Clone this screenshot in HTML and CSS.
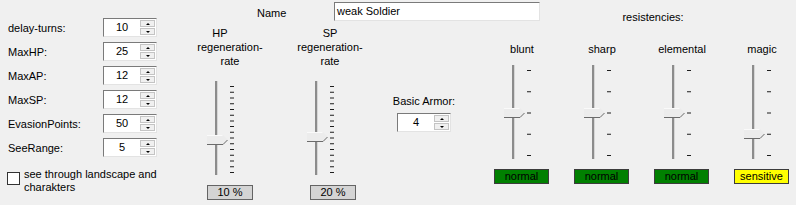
FILE: index.html
```html
<!DOCTYPE html>
<html lang="en">

<head>
    <meta charset="UTF-8">
    <title>Unit editor</title>
    <link rel="stylesheet" href="styles.css">
</head>

<body>
    <!-- shared slider parts -->
    <svg class="defs" width="0" height="0">
        <defs>
            <g id="thumb">
                <polygon points="2,-5 18,-5 23,0 18,5 2,5" fill="#ececec" />
                <polyline points="2,-4.5 17.5,-4.5" stroke="#fafafa" fill="none" />
                <polyline points="2,4.5 18,4.5 22.5,0" stroke="#6b6b6b" fill="none" />
            </g>
            <g id="track">
                <rect x="10" y="1" width="2" height="94" fill="#8c8c8c" />
                <rect x="12" y="1" width="1" height="94" fill="#d6d6d6" />
            </g>
        </defs>
    </svg>

    <div class="form">
        <div class="stats">
            <div class="stat-row">
                <label>delay-turns:</label>
                <div class="spin"><span class="spin-value">10</span><span class="spin-buttons"><i class="up"></i><i class="down"></i></span></div>
            </div>
            <div class="stat-row">
                <label>MaxHP:</label>
                <div class="spin"><span class="spin-value">25</span><span class="spin-buttons"><i class="up"></i><i class="down"></i></span></div>
            </div>
            <div class="stat-row">
                <label>MaxAP:</label>
                <div class="spin"><span class="spin-value">12</span><span class="spin-buttons"><i class="up"></i><i class="down"></i></span></div>
            </div>
            <div class="stat-row">
                <label>MaxSP:</label>
                <div class="spin"><span class="spin-value">12</span><span class="spin-buttons"><i class="up"></i><i class="down"></i></span></div>
            </div>
            <div class="stat-row">
                <label>EvasionPoints:</label>
                <div class="spin"><span class="spin-value">50</span><span class="spin-buttons"><i class="up"></i><i class="down"></i></span></div>
            </div>
            <div class="stat-row">
                <label>SeeRange:</label>
                <div class="spin"><span class="spin-value">5</span><span class="spin-buttons"><i class="up"></i><i class="down"></i></span></div>
            </div>

            <div class="see-through">
                <span class="checkbox"></span>
                <span class="check-text">see through landscape and<br>charakters</span>
            </div>
        </div>

        <div class="main">
            <div class="top-row">
                <span class="name-label">Name</span>
                <div class="name-input">weak Soldier</div>
                <span class="resist-title">resistencies:</span>
            </div>

            <div class="controls">
                <div class="regen">
                    <div class="regen-label"><span class="hp-line">HP</span><br>regeneration-<br>rate</div>
                    <svg class="slider" width="40" height="96" viewBox="0 0 40 96">
                        <use href="#track" />
                        <line x1="27" y1="6" x2="27" y2="93" stroke="#1e1e1e" stroke-width="4" stroke-dasharray="1 4.73" />
                        <use href="#thumb" y="60" />
                    </svg>
                    <div class="percent">10 %</div>
                </div>

                <div class="regen sp">
                    <div class="regen-label">SP<br>regeneration-<br>rate</div>
                    <svg class="slider" width="40" height="96" viewBox="0 0 40 96">
                        <use href="#track" />
                        <line x1="27" y1="6" x2="27" y2="93" stroke="#1e1e1e" stroke-width="4" stroke-dasharray="1 4.73" />
                        <use href="#thumb" y="57" />
                    </svg>
                    <div class="percent">20 %</div>
                </div>

                <div class="armor">
                    <div class="armor-label">Basic Armor:</div>
                    <div class="spin"><span class="spin-value">4</span><span class="spin-buttons"><i class="up"></i><i class="down"></i></span></div>
                </div>

                <div class="resist">
                    <div class="resist-label">blunt</div>
                    <svg class="slider" width="40" height="96" viewBox="0 0 40 96">
                        <use href="#track" />
                        <line x1="27" y1="6" x2="27" y2="92" stroke="#1e1e1e" stroke-width="4" stroke-dasharray="1 20.25" />
                        <use href="#thumb" y="49" />
                    </svg>
                    <div class="status normal">normal</div>
                </div>

                <div class="resist">
                    <div class="resist-label">sharp</div>
                    <svg class="slider" width="40" height="96" viewBox="0 0 40 96">
                        <use href="#track" />
                        <line x1="27" y1="6" x2="27" y2="92" stroke="#1e1e1e" stroke-width="4" stroke-dasharray="1 20.25" />
                        <use href="#thumb" y="49" />
                    </svg>
                    <div class="status normal">normal</div>
                </div>

                <div class="resist">
                    <div class="resist-label">elemental</div>
                    <svg class="slider" width="40" height="96" viewBox="0 0 40 96">
                        <use href="#track" />
                        <line x1="27" y1="6" x2="27" y2="92" stroke="#1e1e1e" stroke-width="4" stroke-dasharray="1 20.25" />
                        <use href="#thumb" y="49" />
                    </svg>
                    <div class="status normal">normal</div>
                </div>

                <div class="resist">
                    <div class="resist-label">magic</div>
                    <svg class="slider" width="40" height="96" viewBox="0 0 40 96">
                        <use href="#track" />
                        <line x1="27" y1="6" x2="27" y2="92" stroke="#1e1e1e" stroke-width="4" stroke-dasharray="1 20.25" />
                        <use href="#thumb" y="70" />
                    </svg>
                    <div class="status sensitive">sensitive</div>
                </div>
            </div>
        </div>
    </div>
</body>

</html>
```

FILE: styles.css
```css
body {
    margin: 0;
    width: 796px;
    height: 205px;
    overflow: hidden;
    background-color: #f0f0f0;
    font-family: "Liberation Sans", Arial, sans-serif;
    font-size: 11px;
    color: #000;
}

.defs {
    position: absolute;
}

.form {
    display: flex;
}

/* left column */
.stats {
    flex: none;
    width: 180px;
    box-sizing: border-box;
    padding: 18px 0 0 8px;
    display: flex;
    flex-direction: column;
    gap: 5px;
}

.stat-row {
    display: flex;
    align-items: center;
    height: 19px;
}

.stat-row label {
    width: 95px;
}

.spin {
    width: 54px;
    height: 19px;
    box-sizing: border-box;
    display: flex;
    background: white;
    border: 1px solid;
    border-color: #7a7a7a #e3e3e3 #e3e3e3 #7a7a7a;
}

.spin-value {
    flex: 1;
    text-align: center;
    line-height: 17px;
}

.spin-buttons {
    width: 16px;
    display: flex;
    flex-direction: column;
    gap: 1px;
    padding: 1px 1px 1px 0;
    box-sizing: border-box;
}

.spin-buttons i {
    flex: 1;
    display: flex;
    align-items: center;
    justify-content: center;
    background: #f0f0f0;
    border: 1px solid #c4c4c4;
}

.spin-buttons i::after {
    content: "";
    border-left: 2px solid transparent;
    border-right: 2px solid transparent;
}

.spin-buttons .up::after {
    border-bottom: 2px solid #000;
}

.spin-buttons .down::after {
    border-top: 2px solid #000;
}

.see-through {
    display: flex;
    align-items: flex-start;
    margin-top: 6px;
    line-height: 13px;
}

.checkbox {
    width: 13px;
    height: 13px;
    box-sizing: border-box;
    margin: 4px 0 0 -1px;
    background: white;
    border: 1px solid #333;
}

.check-text {
    margin-left: 4px;
}

/* right part */
.main {
    flex: none;
    display: flex;
    flex-direction: column;
}

.top-row {
    display: flex;
    align-items: flex-start;
    height: 19px;
    margin-top: 2px;
}

.name-label {
    width: 77px;
    margin: 5px 0 0 77px;
}

.name-input {
    width: 206px;
    height: 19px;
    box-sizing: border-box;
    padding: 0 2px;
    line-height: 17px;
    background: white;
    border: 1px solid;
    border-color: #7a7a7a #e3e3e3 #e3e3e3 #7a7a7a;
}

.resist-title {
    width: 226px;
    margin-top: 9px;
    text-align: center;
}

.controls {
    display: flex;
    margin-top: 5px;
}

.regen {
    flex: none;
    width: 80px;
    margin-left: 10px;
}

.regen.sp {
    margin-left: 20px;
}

.regen-label {
    text-align: center;
    line-height: 14px;
}

.hp-line {
    padding-right: 20px;
}

.regen .slider {
    display: block;
    margin: 12px 0 0 15px;
}

.percent {
    width: 46px;
    height: 15px;
    box-sizing: border-box;
    margin: 9px 0 0 17px;
    background: #d4d4d4;
    border: 1px solid #646464;
    text-align: center;
    line-height: 13px;
}

.sp .percent {
    margin-left: 20px;
}

.armor {
    flex: none;
    width: 68px;
    margin-left: 20px;
    padding-top: 68px;
    display: flex;
    flex-direction: column;
    align-items: center;
}

.armor-label {
    line-height: 14px;
    margin-bottom: 5px;
}

.resist {
    flex: none;
    width: 80px;
}

.armor + .resist {
    margin-left: 24px;
}

.resist-label {
    padding-top: 16px;
    text-align: center;
    line-height: 14px;
}

.resist .slider {
    display: block;
    margin: 8px 0 0 20px;
}

.status {
    width: 55px;
    height: 15px;
    box-sizing: border-box;
    margin: 9px 0 0 12px;
    border: 1px solid #3c3c3c;
    text-align: center;
    line-height: 13px;
}

.normal {
    background-color: #008000;
}

.sensitive {
    background-color: #ffff00;
}
```
